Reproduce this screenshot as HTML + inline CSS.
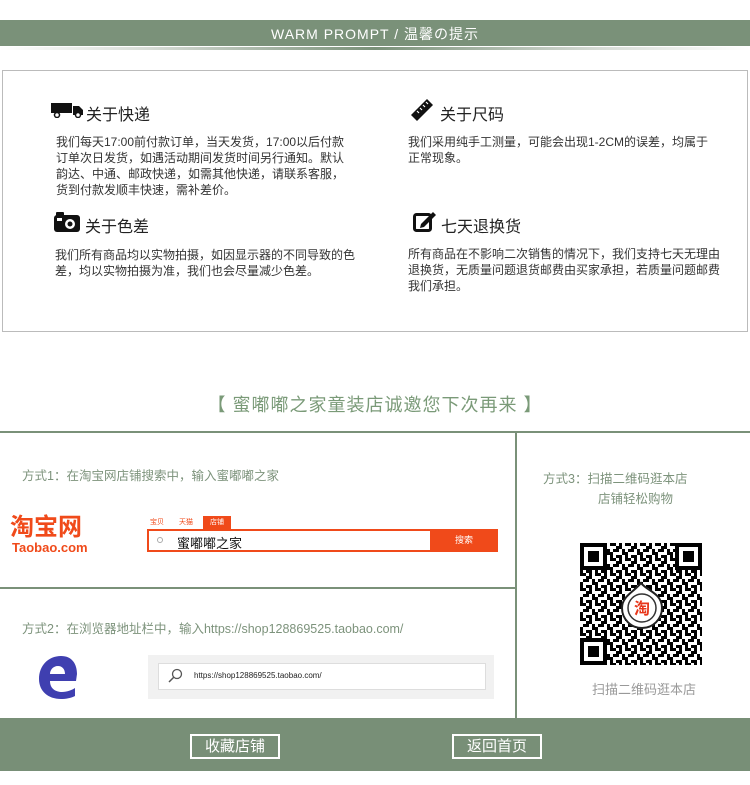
<!DOCTYPE html><html><head><meta charset="utf-8"><style>
*{margin:0;padding:0;box-sizing:border-box}
body{width:750px;height:785px;background:#fff;position:relative;overflow:hidden;font-family:"Liberation Sans","Noto Sans CJK SC",sans-serif;color:#333}
.a{position:absolute}
.h{font-size:16px;color:#222;white-space:nowrap}
.p{font-size:12px;line-height:16px;color:#333}
.g{color:#7d937c;font-size:12.5px;white-space:nowrap}
.btn{position:absolute;border:2px solid #fff;color:#fff;font-size:15px;text-align:center;line-height:21px;height:25px;top:734px}
</style></head><body>
<div class="a" style="left:0;top:20px;width:750px;height:26px;background:#7a9179"></div>
<div class="a" style="left:0;top:47px;width:750px;height:3px;background:linear-gradient(90deg,#fff,#d7dcd6 20%,#7a9179 50%,#d7dcd6 80%,#fff)"></div>
<div class="a" style="left:0;top:24px;width:750px;text-align:center;color:#fff;font-size:14px;letter-spacing:1px">WARM PROMPT / 温馨の提示</div>
<div class="a" style="left:2px;top:70px;width:746px;height:262px;border:1px solid #bbb"></div>

<svg class="a" style="left:51px;top:103px" width="33" height="15" viewBox="0 0 33 15"><rect x="0" y="0" width="21" height="10" fill="#111"/><path d="M22 3h6l4 4v5h-10z" fill="#111"/><circle cx="6" cy="12" r="2.5" fill="#fff" stroke="#111" stroke-width="1.5"/><circle cx="27" cy="12" r="2.5" fill="#fff" stroke="#111" stroke-width="1.5"/></svg>
<div class="a h" style="left:86px;top:101px">关于快递</div>
<div class="a p" style="left:56px;top:134px;width:296px">我们每天17:00前付款订单，当天发货，17:00以后付款订单次日发货，如遇活动期间发货时间另行通知。默认韵达、中通、邮政快递，如需其他快递，请联系客服，货到付款发顺丰快速，需补差价。</div>
<svg class="a" style="left:54px;top:212px" width="26" height="20" viewBox="0 0 26 20"><rect x="0" y="3" width="26" height="17" rx="3" fill="#111"/><rect x="2" y="0" width="8" height="5" rx="1" fill="#111"/><rect x="3" y="6" width="5" height="3" fill="#fff"/><circle cx="16" cy="12" r="5" fill="#fff"/><circle cx="16" cy="12" r="2.5" fill="#111"/></svg>
<div class="a h" style="left:85px;top:213px">关于色差</div>
<div class="a p" style="left:55px;top:247px;width:305px">我们所有商品均以实物拍摄，如因显示器的不同导致的色差，均以实物拍摄为准，我们也会尽量减少色差。</div>

<svg class="a" style="left:409px;top:97px" width="26" height="24" viewBox="0 0 26 24"><path d="M2 18L18 2l6 6L8 24z" fill="#111"/><path d="M8 14l2 2M11 11l2 2M14 8l2 2M17 5l2 2" stroke="#fff" stroke-width="1.2"/></svg>
<div class="a h" style="left:440px;top:101px">关于尺码</div>
<div class="a p" style="left:408px;top:134px;width:305px">我们采用纯手工测量，可能会出现1-2CM的误差，均属于正常现象。</div>
<svg class="a" style="left:413px;top:210px" width="24" height="22" viewBox="0 0 24 22"><rect x="1.5" y="4.5" width="16" height="16" rx="2" fill="none" stroke="#111" stroke-width="3"/><path d="M8 14l12-12 3 3-12 12-4 1z" fill="#111"/></svg>
<div class="a h" style="left:441px;top:213px">七天退换货</div>
<div class="a p" style="left:408px;top:246px;width:318px">所有商品在不影响二次销售的情况下，我们支持七天无理由退换货，无质量问题退货邮费由买家承担，若质量问题邮费我们承担。</div>

<div class="a" style="left:0;top:391px;width:750px;text-align:center;color:#7a9a78;font-size:18px;letter-spacing:1px">【 蜜嘟嘟之家童装店诚邀您下次再来 】</div>

<div class="a" style="left:0;top:431px;width:750px;height:2px;background:#7a9179"></div>
<div class="a" style="left:515px;top:431px;width:2px;height:288px;background:#7a9179"></div>
<div class="a" style="left:0;top:587px;width:516px;height:2px;background:#7a9179"></div>

<div class="a g" style="left:22px;top:465px">方式1：在淘宝网店铺搜索中，输入蜜嘟嘟之家</div>
<div class="a" style="left:10px;top:514px;color:#f04a1a;font-size:24px;font-weight:bold;line-height:28px">淘宝网</div>
<div class="a" style="left:12px;top:540px;color:#f04a1a;font-size:13px;font-weight:bold">Taobao.com</div>
<div class="a" style="left:150px;top:517px;font-size:7px;color:#f04a1a">宝贝</div>
<div class="a" style="left:179px;top:517px;font-size:7px;color:#f04a1a">天猫</div>
<div class="a" style="left:203px;top:516px;width:28px;height:13px;background:#f04a1a;color:#fff;font-size:7px;text-align:center;line-height:13px">店铺</div>
<div class="a" style="left:147px;top:529px;width:351px;height:23px;border:2px solid #f04a1a"></div>
<div class="a" style="left:430px;top:529px;width:68px;height:23px;background:#f04a1a;color:#fff;font-size:9px;text-align:center;line-height:23px">搜索</div>
<div class="a" style="left:157px;top:537px;width:6px;height:6px;border:1px solid #aaa;border-radius:50%"></div>
<div class="a" style="left:177px;top:533px;font-size:13px;color:#111">蜜嘟嘟之家</div>

<div class="a g" style="left:22px;top:618px">方式2：在浏览器地址栏中，输入https://shop128869525.taobao.com/</div>
<svg class="a" style="left:38px;top:656px" width="40" height="43" viewBox="0 0 40 43"><path d="M38 25H12c0 8 6 11 12 11 5 0 10-2 13-4v8c-4 2-9 3-14 3C10 43 1 35 1 23 1 10 10 0 23 0c11 0 16 8 16 18zM12 18h15c0-5-3-8-7-8-5 0-8 4-8 8z" fill="#3f3fb0"/></svg>
<div class="a" style="left:148px;top:655px;width:346px;height:44px;background:#f1f1f1"></div>
<div class="a" style="left:158px;top:663px;width:328px;height:27px;background:#fff;border:1px solid #ddd"></div>
<svg class="a" style="left:167px;top:668px" width="16" height="16" viewBox="0 0 16 16"><circle cx="10" cy="6" r="4.5" fill="none" stroke="#555" stroke-width="1.3"/><path d="M7 9L2 14" stroke="#555" stroke-width="1.5"/></svg>
<div class="a" style="left:194px;top:671px;font-size:8px;color:#222">https://shop128869525.taobao.com/</div>

<div class="a g" style="left:543px;top:468px">方式3：扫描二维码逛本店</div>
<div class="a g" style="left:598px;top:488px">店铺轻松购物</div>
<svg class="a" style="left:580px;top:543px" width="122" height="122" viewBox="0 0 122 122">
<defs><pattern id="q" width="15" height="15" patternUnits="userSpaceOnUse"><rect width="15" height="15" fill="#fff"/><rect x="0" y="0" width="6" height="3" fill="#000"/><rect x="9" y="0" width="3" height="6" fill="#000"/><rect x="3" y="6" width="6" height="3" fill="#000"/><rect x="12" y="6" width="3" height="6" fill="#000"/><rect x="0" y="9" width="3" height="6" fill="#000"/><rect x="6" y="12" width="6" height="3" fill="#000"/><rect x="6" y="3" width="3" height="3" fill="#000"/></pattern></defs>
<rect width="122" height="122" fill="url(#q)"/>
<g fill="#000"><rect x="0" y="0" width="27" height="27"/><rect x="95" y="0" width="27" height="27"/><rect x="0" y="95" width="27" height="27"/></g>
<g fill="#fff"><rect x="4" y="4" width="19" height="19"/><rect x="99" y="4" width="19" height="19"/><rect x="4" y="99" width="19" height="19"/></g>
<g fill="#000"><rect x="8" y="8" width="11" height="11"/><rect x="103" y="8" width="11" height="11"/><rect x="8" y="103" width="11" height="11"/></g>
<path d="M61 40c6 8 21 10 21 25a20 20 0 1 1-40 0c0-12 12-16 19-25z" fill="#fff" stroke="#222" stroke-width="2"/>
<circle cx="62" cy="65" r="14" fill="#fff" stroke="#333" stroke-width="1.5"/>
<text x="62" y="71" font-size="16" fill="#e8361a" text-anchor="middle" font-weight="bold" font-family="Noto Sans CJK SC,sans-serif">淘</text>
</svg>
<div class="a" style="left:592px;top:679px;color:#999;font-size:13px">扫描二维码逛本店</div>

<div class="a" style="left:0;top:718px;width:750px;height:53px;background:#788f77"></div>
<div class="btn" style="left:190px;width:90px">收藏店铺</div>
<div class="btn" style="left:452px;width:90px">返回首页</div>
</body></html>
